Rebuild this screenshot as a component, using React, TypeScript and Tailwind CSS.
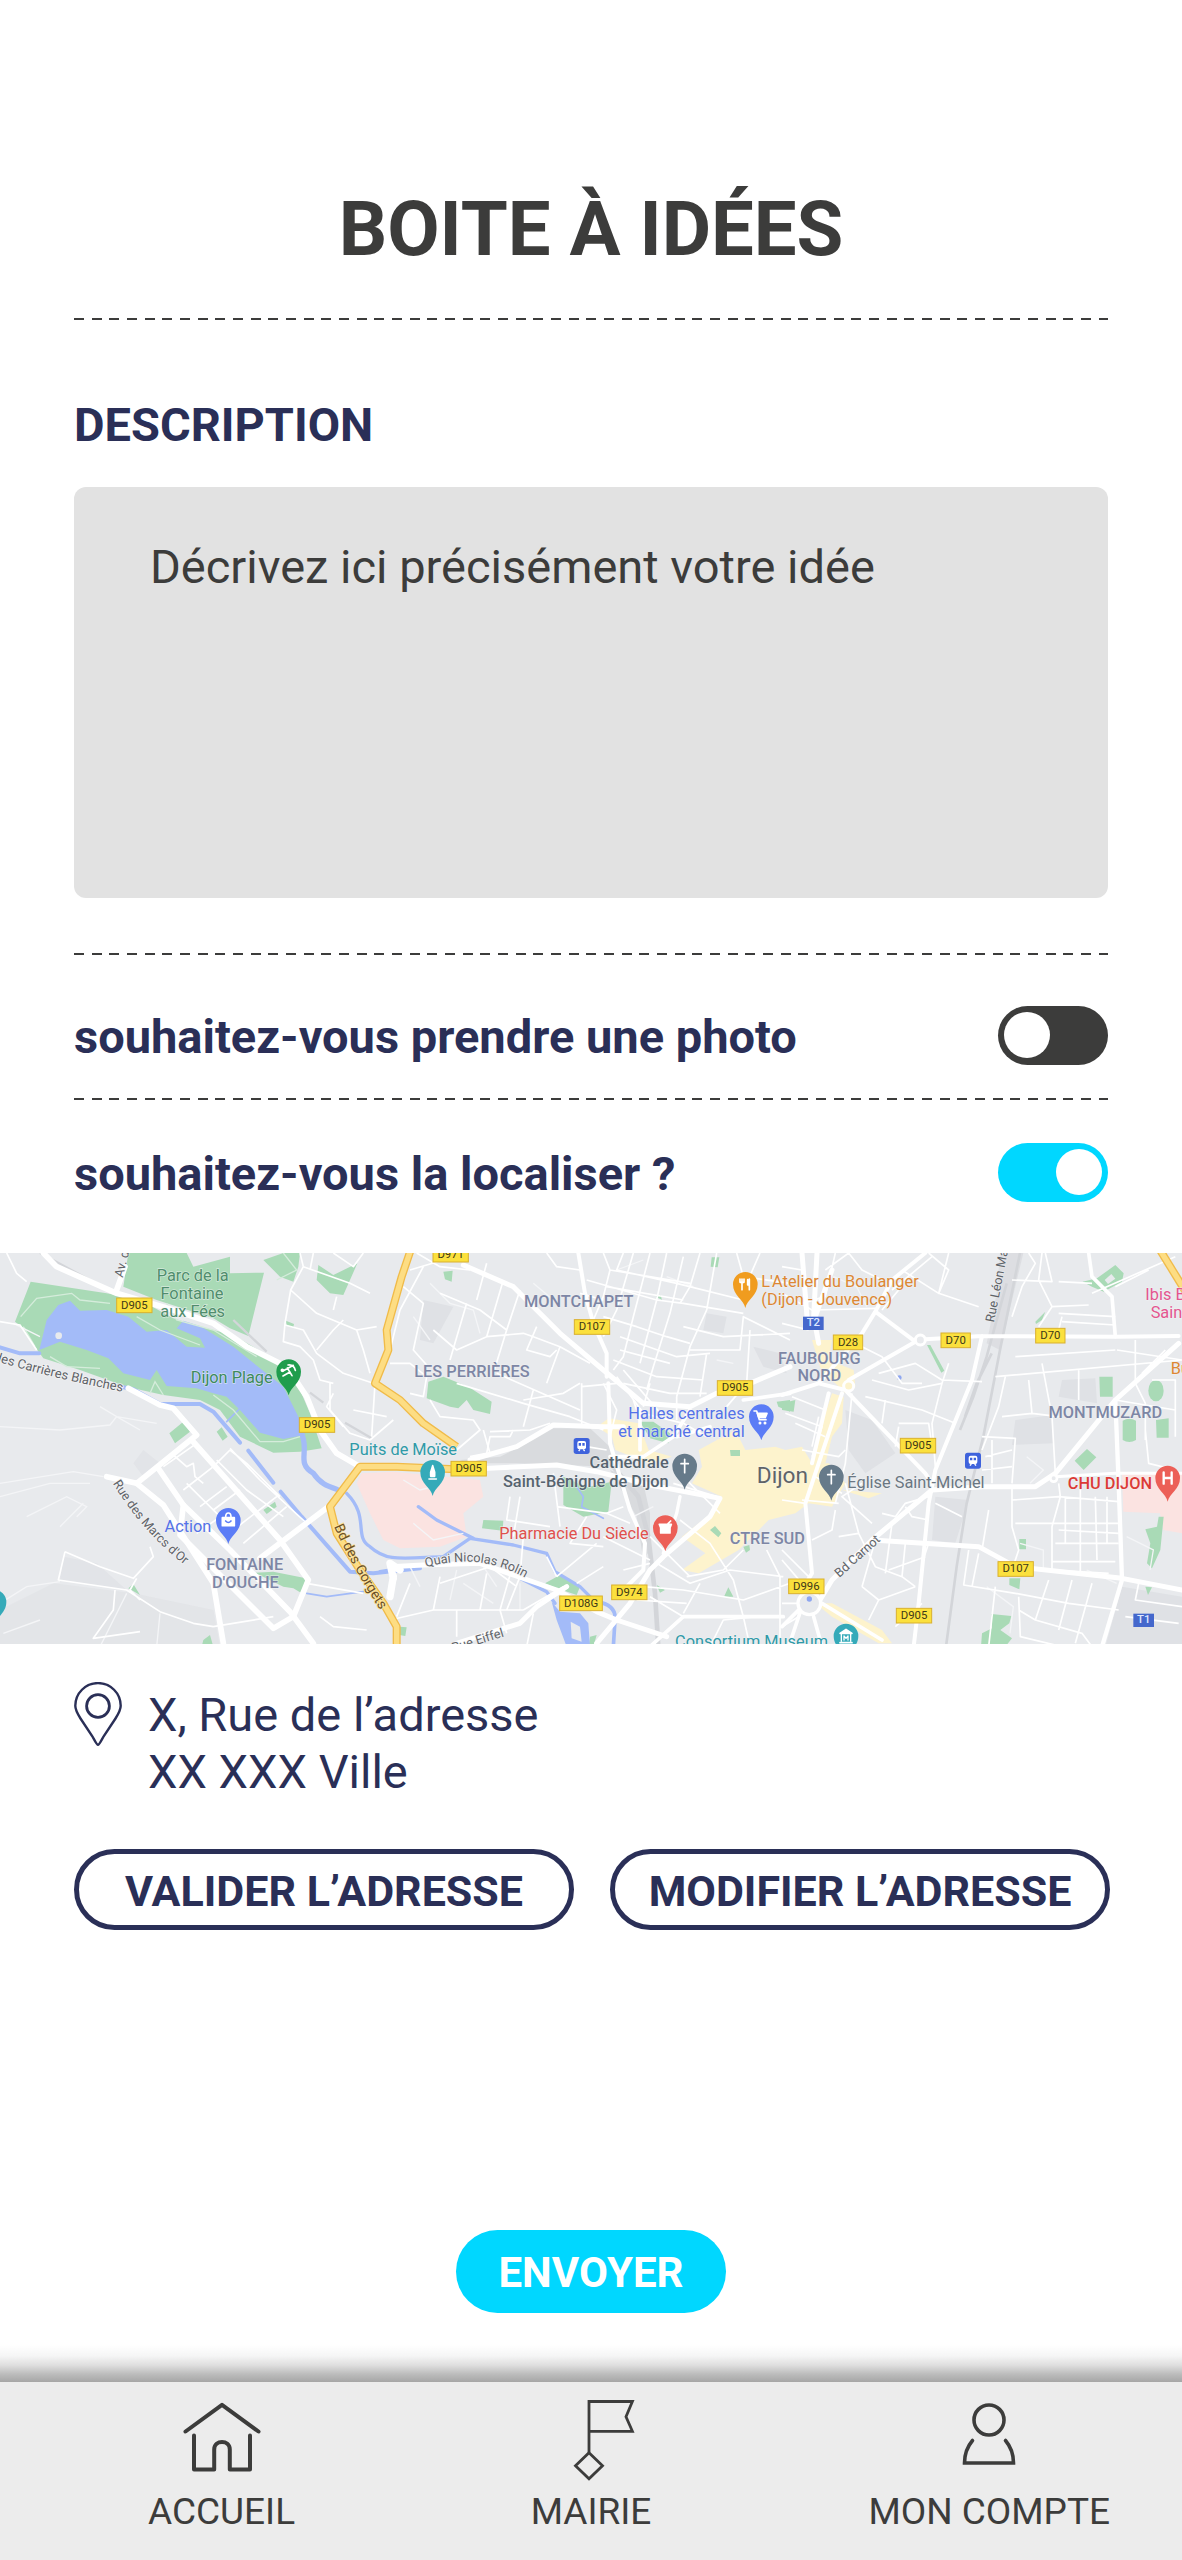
import React, { useState } from "react";

type Point = { x: number; y: number };

/* ---------- Icons ---------- */

function LocationIcon() {
  return (
    <svg viewBox="0 0 48 64" className="h-16 w-12 shrink-0" fill="none" stroke="#2a2f57" aria-hidden="true">
      <path
        strokeWidth="2.4"
        d="M24 62.8C22.8 62.8 22 61 18.5 54.5L6.5 36.5C3 31 1.3 28 1.3 23.8A22.7 22.7 0 0 1 46.7 23.8C46.7 28 45 31 41.5 36.5L29.5 54.5C26 61 25.2 62.8 24 62.8Z"
      />
      <circle cx="24" cy="24" r="11.4" strokeWidth="2.8" />
    </svg>
  );
}

function HomeIcon() {
  return (
    <svg viewBox="0 0 82 81" className="h-[81px] w-[82px]" fill="none" stroke="#3c3c3b" strokeWidth="4" strokeLinecap="round" strokeLinejoin="round" aria-hidden="true">
      <path d="M4.5 31.5L41 4.8L77.5 31.5" />
      <path d="M13 35.5V69.5H33.2V49.5C33.2 39.5 48.8 39.5 48.8 49.5V69.5H69V35.5" />
    </svg>
  );
}

function FlagIcon() {
  return (
    <svg viewBox="0 0 88 81" className="h-[81px] w-[88px]" fill="none" stroke="#3c3c3b" strokeWidth="2.8" aria-hidden="true">
      <path d="M42 52.5V1.5H85.4L79 16.7L85.4 31.3H42" />
      <path d="M42 52.7L55.5 65.7L42 78.7L28.5 65.7Z" />
    </svg>
  );
}

function PersonIcon() {
  return (
    <svg viewBox="0 0 60 81" className="h-[81px] w-[60px]" fill="none" stroke="#3c3c3b" strokeWidth="3.6" aria-hidden="true">
      <circle cx="30" cy="20" r="15" />
      <path strokeLinecap="round" d="M13.5 40.5C8 47 5.5 56 5.5 63H54.5C54.5 56 52 47 46.5 40.5" />
    </svg>
  );
}

/* ---------- Map ---------- */

const MID = 1170;
const EAST = 2346;

type Shield = Point & { text: string; w?: number };

const shields: Shield[] = [
  { x: 403, y: 166, text: "D905" },
  { x: 951, y: 525, text: "D905" },
  { x: MID + 182, y: 14, text: "D971" },
  { x: MID + 606, y: 231, text: "D107" },
  { x: MID + 1035, y: 414, text: "D905" },
  { x: MID + 236, y: 656, text: "D905" },
  { x: MID + 573, y: 1060, text: "D108G", w: 128 },
  { x: MID + 718, y: 1027, text: "D974" },
  { x: EAST + 198, y: 277, text: "D28", w: 88 },
  { x: EAST + 521, y: 271, text: "D70", w: 88 },
  { x: EAST + 805, y: 257, text: "D70", w: 88 },
  { x: EAST + 408, y: 587, text: "D905" },
  { x: EAST + 701, y: 957, text: "D107" },
  { x: EAST + 73, y: 1009, text: "D996" },
  { x: EAST + 396, y: 1097, text: "D905" },
];

type Label = Point & {
  text: string;
  color: string;
  size?: number;
  weight?: number;
  anchor?: "start" | "middle" | "end";
  turn?: number;
};

const labels: Label[] = [
  { x: 578, y: 92, text: "Parc de la", color: "#4f8d6c", anchor: "middle" },
  { x: 576, y: 147, text: "Fontaine", color: "#4f8d6c", anchor: "middle" },
  { x: 578, y: 202, text: "aux Fées", color: "#4f8d6c", anchor: "middle" },
  { x: 818, y: 398, text: "Dijon Plage", color: "#3d8a5d", anchor: "end" },
  { x: 634, y: 845, text: "Action", color: "#5472e8", anchor: "end" },
  { x: 734, y: 960, text: "FONTAINE", color: "#7d86a5", size: 49, weight: 500, anchor: "middle" },
  { x: 736, y: 1014, text: "D'OUCHE", color: "#7d86a5", size: 49, weight: 500, anchor: "middle" },
  { x: 1048, y: 615, text: "Puits de Moïse", color: "#2f9aa8" },
  { x: MID + 566, y: 171, text: "MONTCHAPET", color: "#7d86a5", size: 49, weight: 500, anchor: "middle" },
  { x: MID + 246, y: 382, text: "LES PERRIÈRES", color: "#7d86a5", size: 49, weight: 500, anchor: "middle" },
  { x: MID + 1064, y: 506, text: "Halles centrales", color: "#5472e8", anchor: "end" },
  { x: MID + 1064, y: 561, text: "et marché central", color: "#5472e8", anchor: "end" },
  { x: MID + 836, y: 655, text: "Cathédrale", color: "#56636f", weight: 500, anchor: "end" },
  { x: MID + 836, y: 710, text: "Saint-Bénigne de Dijon", color: "#56636f", weight: 500, anchor: "end" },
  { x: MID + 776, y: 866, text: "Pharmacie Du Siècle", color: "#e0504c", anchor: "end" },
  { x: EAST - 44, y: 882, text: "CTRE SUD", color: "#7d86a5", size: 49, weight: 500, anchor: "middle" },
  { x: EAST + 78, y: 698, text: "Dijon", color: "#5f6368", size: 68, anchor: "end" },
  { x: EAST - 62, y: 110, text: "L'Atelier du Boulanger", color: "#dd8733" },
  { x: EAST - 62, y: 165, text: "(Dijon - Jouvence)", color: "#dd8733" },
  { x: EAST + 112, y: 342, text: "FAUBOURG", color: "#7d86a5", size: 49, weight: 500, anchor: "middle" },
  { x: EAST + 112, y: 393, text: "NORD", color: "#7d86a5", size: 49, weight: 500, anchor: "middle" },
  { x: EAST + 970, y: 503, text: "MONTMUZARD", color: "#7d86a5", size: 49, weight: 500, anchor: "middle" },
  { x: EAST + 196, y: 713, text: "Église Saint-Michel", color: "#6a7682" },
  { x: EAST + 1110, y: 717, text: "CHU DIJON", color: "#dc3b36", weight: 500, anchor: "end" },
  { x: EAST + 1090, y: 150, text: "Ibis Budget", color: "#e4558f" },
  { x: EAST + 1106, y: 204, text: "Saint-Apollinaire", color: "#e4558f" },
  { x: EAST + 1166, y: 371, text: "Burger", color: "#dd8733" },
  { x: EAST + 138, y: 1190, text: "Consortium Museum", color: "#2f9aa8", anchor: "end" },
  { x: EAST + 172, y: 984, text: "Bd Carnot", color: "#5f6368", size: 38, turn: -42 },
  { x: EAST + 636, y: 218, text: "Rue Léon Mauris", color: "#5f6368", size: 38, turn: -79 },
  { x: 368, y: 84, text: "Av. du Lac", color: "#5f6368", size: 38, turn: -76 },
  { x: MID + 190, y: 1206, text: "Rue Eiffel", color: "#5f6368", size: 38, turn: -17 },
];

function PinMarker({ x, y, fill, children }: Point & { fill: string; children?: React.ReactNode }) {
  return (
    <g transform={`translate(${x} ${y})`}>
      <path d="M0 71C-5 46-37 34-37 0A37 37 0 0 1 37 0C37 34 5 46 0 71Z" fill={fill} />
      <g fill="none" stroke="#fff" strokeWidth="5" strokeLinecap="round" strokeLinejoin="round">
        {children}
      </g>
    </g>
  );
}

function TrainMarker({ x, y }: Point) {
  return (
    <g transform={`translate(${x} ${y})`}>
      <rect x="-24" y="-24" width="48" height="48" rx="8" fill="#3f63dc" />
      <rect x="-13" y="-15" width="26" height="25" rx="6" fill="#fff" />
      <path d="M-9 -9H-2V-1H-9ZM2 -9H9V-1H2Z" fill="#3f63dc" />
      <path d="M-9 15L-5 10M9 15L5 10" stroke="#fff" strokeWidth="4" />
    </g>
  );
}

const CROSS = "M0 -20V20M-11 -7H11";

function CityMap() {
  return (
    <svg
      viewBox="0 9 3546 1173"
      className="block w-full"
      role="img"
      aria-label="Carte de Dijon"
      fontFamily="Roboto, sans-serif"
    >
      <rect y="0" width="3546" height="1190" fill="#e8eaed" />

      {/* built-up areas in a slightly darker tone */}
      <g fill="#dfe1e5">
        <path d="M0 1080L160 1000L400 1030L640 1080L660 1190H0Z" opacity=".6" />
        <path d="M430 600L480 640L430 680L400 640ZM190 920L290 940L380 1020L180 990Z" opacity=".7" />
        <g transform="translate(1170 0)">
          <path d="M100 150L190 170L130 280L90 270Z" />
          <path d="M1090 290L1170 310L1190 370L1120 350ZM950 190L1010 200L1000 250L940 240Z" />
        </g>
        <g transform="translate(2346 0)">
          <path d="M190 480L270 510L340 610L250 670L200 600Z" />
          <path d="M460 740L560 750L520 880L450 870Z" />
          <path d="M700 510L810 495L815 580L690 585ZM840 390L940 385L945 460L830 440Z" />
          <path d="M1020 1010L1200 1040V1190H970Z" />
        </g>
      </g>

      {/* town centre */}
      <g transform="translate(2346 0)" fill="#fdf3cd">
        <path d="M-555 530L-520 505L-430 520L-400 600L-330 620L-400 640L-500 600L-510 560Z" />
        <path d="M-250 600L-140 540L-110 600L-20 590L10 600L60 590L90 640L140 640L190 700L150 770L80 760L40 790L-40 810L-130 900L-250 970L-300 960L-230 910L-300 860L-200 780L-180 740L-270 700L-240 650Z" />
        <path d="M150 430L185 440L180 520L150 560L130 640L90 640L110 550ZM90 270L150 270L140 330L215 360L220 410L190 430L160 400L120 370Z" />
        <path d="M100 1060L150 1060L300 1140L330 1180H290L150 1100ZM180 720L300 730L260 745Z" />
      </g>

      {/* hospital grounds */}
      <g fill="#fbe3e1">
        <path d="M1085 670L1180 665L1440 690L1450 740L1390 790L1400 860L1320 890L1200 895L1150 870L1110 790L1070 700Z" />
        <path d="M3366 670H3546V850L3490 840L3480 790L3370 785Z" />
      </g>

      {/* parks */}
      <g fill="#a9dab6">
        <path d="M385 9H560L580 50L690 20V70L792 68L745 258L690 235L640 205L470 150L370 110Z" />
        <path d="M92 95L320 130L420 150L520 205L600 230L700 255L860 350L900 420L930 490L965 595L900 605L820 608L720 560L660 480L600 450L490 435L380 410L240 360L130 325L105 290L70 235L45 215Z" />
        <path d="M790 30L850 9H900L895 50L880 95L840 80ZM955 45L1000 75L1072 40L1050 90L1030 135L990 130L950 90Z" />
        <path d="M508 550L550 515L570 545L525 580ZM650 545L665 532L683 560L668 572ZM790 780L825 755L830 770L800 792Z" />
        <path d="M765 968L820 965L918 985L905 1030L880 1015L850 1010ZM385 1015L400 1002L420 1035ZM610 1170L630 1155L640 1190H605ZM858 212L882 222L880 232L860 226Z" />
        <g transform="translate(1170 0)">
          <path d="M115 395L160 380L235 410L305 455L300 492L250 480L230 450L205 475L180 470L110 445Z" />
          <path d="M520 680L590 712L665 695L655 785L580 800L520 765ZM280 810L340 812L338 842L276 835Z" />
          <path d="M465 1000L510 975L570 1010L560 1035L500 1015ZM750 515L790 515L840 550L835 580L780 565ZM1160 455L1200 450V485L1165 470Z" />
          <path d="M160 65L188 62L185 95L165 88ZM965 22L988 22L983 52L962 50ZM798 140L812 135L816 150ZM1020 600H1050V618H1022ZM960 840L975 828L994 850L985 862ZM1060 890L1078 885L1080 900L1068 908ZM1002 1040L1015 1012L1030 1040ZM800 1005L825 1020L810 1028ZM30 1130L50 1132L46 1158L28 1155ZM600 1160L620 1155L610 1190H596Z" />
        </g>
        <g transform="translate(2346 0)">
          <path d="M0 460L40 450L35 485L0 480ZM435 285H445L487 362L478 368ZM760 215L790 185L780 210L762 222Z" />
          <path fillRule="evenodd" d="M902 95L945 85L1000 45L1025 70L1020 95L965 125L930 110ZM968 90L988 72L1000 86L978 102Z" />
          <path d="M952 380H992V440H954ZM1022 512Q1042 500 1062 512V570Q1042 582 1022 570ZM1122 510L1160 505V563H1124ZM878 632L915 597L943 622L905 660Z" />
          <ellipse cx="1122" cy="422" rx="23" ry="32" />
          <path d="M1090 838L1125 830L1130 800L1145 800L1135 900L1110 955L1095 940L1105 880ZM712 867H732V898H712ZM682 985H715L712 1018L682 1005ZM628 1092L688 1098L682 1120L655 1140L690 1165L670 1190H597L600 1150L630 1135ZM1090 1010L1110 1012L1098 1035Z" />
        </g>
      </g>

      {/* railways */}
      <g fill="none" stroke="#d3d5d9">
        <g fill="#d9dbde" stroke="none">
          <path d="M1380 630L1500 620L1600 570L1660 535L1770 535L1840 600L1830 650L1680 645L1550 640L1400 640Z" />
          <path d="M1830 660L1930 700L1950 790V900L1930 930L1910 800Z" />
          <path d="M3000 9H3070L3000 300L2960 280L2990 130Z" opacity=".8" />
        </g>
        <path strokeWidth="14" d="M1840 650L1915 740L1945 860L1965 1030L1975 1190" />
        <path strokeWidth="8" d="M3060 9L3000 300L2950 560L2900 760L2870 950L2838 1190M3020 100L2960 320L2920 440L2880 540M2975 310L2930 400L2895 500" />
        <path strokeWidth="7" d="M120 9L260 85L330 120M700 210L800 305M930 428L970 458M1035 518L1115 565" />
      </g>

      {/* lakes, river and canals */}
      <path
        fill="#a3bbf8"
        d="M118 300L140 210L175 165L210 152L240 182L320 180L385 200L440 245L500 240L560 290L615 293L600 265L530 235L550 212L600 228L700 290L780 355L850 410L880 470L905 520L915 555L850 567L780 548L720 480L680 440L640 430L590 415L500 408L470 360L450 390L370 370L325 325L260 300L180 275Z"
      />
      <g fill="none" stroke="#a3bbf8" strokeWidth="12" strokeLinecap="round" strokeLinejoin="round">
        <path d="M0 292L60 310L118 310" />
        <path d="M350 408L400 418L480 462L600 462L640 485L720 578M745 602L820 698M842 725L905 800L1050 965L1120 970L1260 955" />
        <path strokeWidth="16" d="M908 560C925 610 890 640 940 670C960 700 980 708 1010 718" />
        <path strokeWidth="10" d="M1040 730C1110 800 1060 860 1110 890C1160 935 1200 925 1330 920L1410 865L1540 885L1640 910L1665 965L1740 1010L1770 1040M1140 965L1200 955M1255 770L1310 810L1420 865M1560 985L1640 1025L1665 1060" />
        <path strokeWidth="5" d="M920 1030L980 1040L1090 1025M680 515L720 475M1730 710L1750 740L1745 770L1810 805" />
        <path strokeWidth="11" d="M1790 1055Q1850 1065 1845 1110L1840 1190" />
        <path fill="#a3bbf8" stroke="none" d="M1655 1055L1680 1085L1740 1090L1765 1120L1770 1190H1700L1670 1110Z" />
        <path fill="#e8eaed" stroke="none" d="M1712 1115L1740 1130L1745 1175L1715 1165Z" />
      </g>
      <circle cx="176" cy="257" r="10" fill="#e8eaed" />
      <g fill="#8ea6f0">
        <circle cx="2698" cy="383" r="7" />
      </g>

      {/* paths through the parks */}
      <g fill="none" stroke="#d5ecdb" strokeWidth="4">
        <path d="M62 200L110 145L215 130L240 150L330 160M105 290L70 230M150 320L200 350L300 355M410 200L480 240L560 270L600 285M640 435L700 480L780 575L850 575L900 560M450 430L465 395L490 435M500 160L530 210L640 240L770 320M850 9L890 60L830 90M570 1020" />
      </g>

      {/* faint tracks */}
      <g fill="none" stroke="#f4f5f7" strokeWidth="4">
        <path d="M0 530L180 540L330 525L350 500L420 540M0 700L220 665L310 680M80 800L200 740L260 770L230 800M0 740L150 700L270 700M40 220L120 260M300 470L350 500L470 520M0 1060L80 1010L180 995M180 830L250 760M380 1030L300 1190M480 1090L470 1190M10 1150L120 1110" />
        <path d="M1290 100L1350 160L1420 180L1440 250M1240 200L1290 270M1600 100L1660 150M1850 60L1930 30M2000 80L2080 110M2150 330L2200 340M1900 800L1960 770" />
        <path d="M1230 950L1260 1010M1370 960L1350 1050M1390 1000L1480 1060M1560 1000V1080M1210 690L1260 720L1300 710M1240 820L1300 870L1390 850M1450 950L1490 1010" />
        <path d="M3060 880L3130 900V960M2960 1010L3040 1070L3030 1150M3260 960L3350 1000M3380 860L3460 900L3450 960M3080 620L3130 660L3090 700M2500 80L2570 110L2600 170" />
      </g>

      {/* minor streets, western districts */}
      <g fill="none" stroke="#fff" strokeWidth="5" strokeLinejoin="round">
        <path d="M900 9L910 50L872 120L950 190L1070 240L1130 230M872 120L855 220L850 275L900 290L940 330L960 390L1000 400M855 225L910 240L950 310L1030 370L1120 400M910 50L1050 100L1110 130M940 9L930 60M1000 9L1060 50L1090 9M1000 180L1010 140M1070 240L1090 300L1110 370M950 300L1000 240L1030 210M990 400L990 480L1050 550L1110 570L1180 510M1000 430L980 470L1030 530M1125 400L1115 560" />
        <path d="M490 650L590 580M550 720L640 650L690 600M520 615L560 650L580 640L585 680L610 700M600 770L680 710M640 780L720 720M650 630L740 720L850 800M690 595L780 690L920 820M700 840L830 740M730 880L860 770M590 850L690 780M690 600L740 640L790 690L840 740M560 700L660 800" />
        <path d="M195 905L175 990L380 1020L480 1085L580 1120L640 1130M195 905L300 950L400 985L460 920L450 890M345 1020L340 1080L280 1165L420 1145M410 985L390 1020L420 1050M640 1130L820 1100M960 1100L1000 1130L1100 1140M920 1000L1090 1030" />
        <path d="M0 215L60 225L110 300M20 9L50 70L80 95M1060 480L1160 500" />
      </g>

      {/* minor streets, central districts */}
      <g transform="translate(1170 0)" fill="none" stroke="#fff" strokeWidth="5" strokeLinejoin="round">
        <path d="M60 60L230 9M80 9L150 50L240 60M100 50L30 180L0 300M40 110L100 160L70 300L110 345M150 130L270 180L350 240M130 240L200 300L290 260L400 250L430 260M230 160L180 330M290 40L260 150M340 90L290 260M390 120L350 240L310 370M430 260L510 290L600 340M440 230L410 300L480 320L500 300M510 290L470 400M320 370L570 480M400 450L520 430L570 400M200 400L400 460L540 500L640 540M430 420L400 530M575 400V530M575 410L680 400M0 340L60 340L110 380L100 440L60 430M120 450L150 500L250 510L270 540L200 600M300 545L420 540L480 520M370 540L360 560L300 560L290 610L240 620" />
        <path d="M470 9L500 50L570 60M640 9L660 60L640 140L610 210M730 9L680 180L640 260M590 90L800 150L880 160L1060 190M570 130L640 150M700 9L680 60L860 100L1060 150M780 9L730 200L700 320L670 360M830 9L800 150L750 340M880 20L840 190L790 350L770 420M930 9L900 110L870 160M980 9L950 180L900 290L860 440M660 60L900 100M650 110L880 150M640 200L740 230L830 260L900 280M690 260L860 320L960 310M690 300L840 340M670 330L800 380L940 390M880 230L1000 260L1200 250M900 300L1050 300L1060 200L1200 270M1040 9L1060 80L1200 100M1110 9L1070 100M1080 240L1070 400L1010 470M950 310L930 440M700 400L840 430L950 430M780 400L760 470M860 440V510M730 450L740 480" />
        <path d="M640 400L680 480L660 560M680 380L760 490L880 520L950 560M700 360L820 500M590 590L650 600M360 740L350 810L480 830M390 740L370 860M490 670L510 830M500 770L650 790L700 770M590 800L540 880L640 890M640 860L780 930M620 880L500 980M650 790L720 820M280 540L300 610M400 860L390 980L350 1080M150 1000L300 950L380 1010M150 980L130 1080L0 1110M130 1080L400 1080M200 1080V1160M290 970L270 1080M370 940L330 1080L350 1150M60 1000L20 1100M430 1090L410 1190M400 1080L520 1010M860 660L990 790M850 700L980 740M870 810L960 880L1030 990L1060 1100M890 980L1000 960L1060 900M800 940L900 1000L1020 960L1180 980M760 1010L880 1020L1060 1050L1200 1000M880 1090L930 1000M960 1190L1000 1110L1100 1100M1130 900L1170 980L1170 1190M780 1040L880 1100M740 1050L890 1060M1060 1100L1080 1190M780 860L900 980" />
        <path d="M500 980L470 920M640 950L560 1000M700 960L780 940" />
      </g>

      {/* minor streets, eastern districts */}
      <g transform="translate(2346 0)" fill="none" stroke="#fff" strokeWidth="5" strokeLinejoin="round">
        <path d="M0 50L60 60M130 60L200 9L240 60L300 90M160 9L130 140L60 160M0 130L90 180L280 175M330 120L450 20M360 60L470 130L500 60L440 9M500 9L470 130L590 170M300 180L350 120M0 220L80 240M240 290L300 320L360 400L420 400M290 370L400 340L480 390L600 395M270 390L380 420L480 400L450 520L460 650M480 400L500 340M250 440L420 480L520 520M210 430L190 640L160 760M310 450L300 520M350 520L440 520L450 590M350 530L340 590M10 490L120 530L90 620M30 440L130 480M40 520L130 560" />
        <path d="M740 9L760 40L720 110L690 200M780 9L770 90L810 170L920 165M690 90L810 95L790 9M810 170L770 230M830 95L930 100M930 130L1180 20M1000 110L1100 60M830 190L1000 200M840 215L1000 225M700 320L1000 300M640 380L1200 330M670 380L650 470L600 600M740 390L750 490M660 500L750 490L830 500M780 340L810 500L820 670M890 360V450M840 200L830 240M1005 300L1200 330M1060 270V400M1080 370L1150 300M1090 540L1100 640L1180 660M1060 400L1090 460L1090 570M1000 450L1180 480M1110 390H1180V560" />
        <path d="M600 560L700 565L690 700M610 620L690 600M600 660L690 650M630 570V700M690 710V830L710 900L690 960M690 750L830 740L1010 755M700 820H1010M830 700L835 740L810 830V930M850 740V880M895 700V970M940 740L945 930M975 740V880L1010 880M820 880H1010M810 935L1000 935M830 840L1010 850M810 930V960L980 970M600 900L620 780M560 900L545 1005L700 1030L860 1060L1010 1080M590 910L570 1010M640 1010L620 1190M710 1040L715 1160L840 1190M800 990L760 1110L900 1150L930 1190M870 990L830 1140M930 1000L880 1180M1070 1000L1060 1050L1200 1070M1030 1100L1190 1120M710 1080L760 1110" />
        <path d="M190 700L230 850L280 950L360 980L400 1010M160 780L150 840L90 870M230 850L170 860M270 820L180 740L240 700M300 790L340 800L370 760L440 740M330 820L310 970M370 770L390 800L440 810M370 880L360 980M240 1010L290 1050L400 1010M280 870L240 1010M290 1050L260 1110M320 960L430 920M440 880L420 940M460 760L540 800M100 680L180 730M60 750L170 760M0 750L70 760M60 600L170 620L190 600M110 500L90 590M0 900L80 980M0 930L60 1000M420 1060L340 1130M0 1060L50 1060M0 1130L50 1100" />
      </g>

      {/* main roads */}
      <g fill="none" stroke="#fff" strokeLinecap="round" strokeLinejoin="round">
        <g strokeWidth="17">
          <path d="M130 9L170 50L350 130L520 180L640 220L740 290L860 350L920 440L960 540L1010 610L1080 650" />
          <path d="M385 415L480 465L520 475L590 555L410 700L320 680M575 570L840 870L925 990L880 1100L820 1135L540 855L550 765" />
          <path d="M475 655L550 765L690 900L870 1085L940 1180M410 700L490 765L640 1000L670 1180M780 925L985 770" />
          <path d="M350 120L375 50" />
          <path d="M1180 985L1170 940L1200 960M1170 1040L1180 980" strokeWidth="22" />
        </g>
        <g transform="translate(1170 0)" strokeWidth="15">
          <path d="M220 45L370 110L510 250L640 360L760 460L900 470L980 430L1080 400L1200 350" />
          <path strokeWidth="12" d="M565 9L585 130L610 220L650 310L650 380M655 400L660 580L720 780L765 880L760 960L700 1020" />
          <path d="M240 630L380 590L490 525L640 530L700 530M190 660L500 645L620 665L780 705L990 745L960 800L820 920L780 960L720 1060L620 1180" />
          <path d="M870 740L860 790L820 910" strokeWidth="10" />
          <path d="M0 950L100 945L270 940L500 1020L620 1085L680 1110L830 1160" />
          <path d="M530 1010L440 1070L390 1120L200 1180" />
          <path strokeWidth="11" d="M900 480L850 560L760 620L660 620M1060 450L1200 430M750 480V600M960 530L860 560" />
          <path strokeWidth="11" d="M780 1190L880 1100H1180" />
        </g>
        <g transform="translate(2346 0)" strokeWidth="15">
          <path d="M60 9L75 200M105 9L95 200L110 280M150 60L100 200" />
          <path d="M200 390L400 275L280 185L240 250L110 400L0 435M110 400L190 420L430 670L450 700M280 185L330 90L430 9" strokeWidth="12" />
          <path d="M430 268L600 258L1000 260L1190 258M600 258L570 390L460 660L440 760L410 1060L395 1190" strokeWidth="12" />
          <path d="M920 9L930 80L990 140L1000 260" strokeWidth="11" />
          <path d="M1190 280L1000 450L820 670L760 710L600 710L450 720L270 870L150 990L90 1090" />
          <path d="M1000 450L1010 700L1020 990L960 1190" strokeWidth="13" />
          <path d="M270 870L590 890L700 950L1020 985L1200 1020" />
          <path d="M820 680L1000 670H1200" strokeWidth="9" />
          <path d="M180 430L110 640L70 760L90 970L60 1020M140 430L90 640" strokeWidth="12" />
          <path d="M0 1130L60 1070L20 1190M120 1060L300 1170M95 1100L120 1190" strokeWidth="11" />
          <circle cx="415" cy="270" r="15" strokeWidth="9" fill="#e8eaed" />
          <circle cx="200" cy="408" r="15" strokeWidth="9" fill="#fdf3cd" />
          <circle cx="82" cy="1060" r="34" strokeWidth="10" fill="#e8eaed" />
          <circle cx="82" cy="1047" r="8" stroke="none" fill="#8ea6f0" />
          <circle cx="815" cy="685" r="10" strokeWidth="8" fill="#e8eaed" />
        </g>
      </g>

      {/* expressways */}
      <g fill="none" strokeLinejoin="round">
        {[
          { stroke: "#f0bb49", width: 24 },
          { stroke: "#fddd83", width: 16 },
        ].map((layer) => (
          <g key={layer.stroke} stroke={layer.stroke} strokeWidth={layer.width}>
            <path d="M1232 0L1205 80L1160 240L1165 300L1125 400L1200 450L1270 520L1370 590" />
            <path d="M1420 660L1190 650L1080 650L990 770L1010 850L1080 960L1150 1060L1190 1130V1190" />
            <path d="M3480 0L3560 130" />
          </g>
        ))}
      </g>

      {/* street names that follow a curve */}
      <path id="street-west" d="M-62 318Q100 372 360 424" fill="none" />
      <path id="street-marcs" d="M338 700Q430 850 560 950" fill="none" />
      <path id="street-gorgets" d="M1002 830Q1060 960 1160 1110" fill="none" />
      <path id="street-quai" d="M1278 952Q1440 905 1580 986" fill="none" />
      <g fill="#5f6368" fontSize="39" stroke="#f1f2f4" strokeWidth="5" paintOrder="stroke">
        <text><textPath href="#street-west">R. des Carrières Blanches</textPath></text>
        <text fontSize="38"><textPath href="#street-marcs">Rue des Marcs d'Or</textPath></text>
        <text fontSize="42" fill="#6b5024" stroke="#fbe3a0"><textPath href="#street-gorgets">Bd des Gorgets</textPath></text>
        <text fontSize="38"><textPath href="#street-quai">Quai Nicolas Rolin</textPath></text>
      </g>

      {labels.map((l) => (
        <text
          key={l.text + l.x}
          x={l.x}
          y={l.y}
          fill={l.color}
          fontSize={l.size ?? 49}
          fontWeight={l.weight ?? 400}
          textAnchor={l.anchor ?? "start"}
          transform={l.turn ? `rotate(${l.turn} ${l.x} ${l.y})` : undefined}
          stroke="#f1f3f4"
          strokeWidth="4"
          strokeOpacity="0.6"
          paintOrder="stroke"
        >
          {l.text}
        </text>
      ))}

      {shields.map((s) => {
        const w = s.w ?? 106;
        return (
          <g key={`${s.text}-${s.x}`}>
            <rect x={s.x - w / 2} y={s.y - 22} width={w} height="44" fill="#fbe03d" stroke="#d9b02f" strokeWidth="3" />
            <text x={s.x} y={s.y + 10} textAnchor="middle" fontSize="34" fill="#3d3817">
              {s.text}
            </text>
          </g>
        );
      })}
      {[
        { x: EAST + 94, y: 220, text: "T2" },
        { x: EAST + 1085, y: 1111, text: "T1" },
      ].map((t) => (
        <g key={t.text}>
          <rect x={t.x - 31} y={t.y - 20} width="62" height="40" fill="#4467cc" />
          <text x={t.x} y={t.y + 9} textAnchor="middle" fontSize="34" fontWeight="500" fill="#dfe7ff">
            {t.text}
          </text>
        </g>
      ))}

      <TrainMarker x={MID + 575} y={588} />
      <TrainMarker x={EAST + 573} y={632} />

      <PinMarker x={866} y={365} fill="#1f9d4d">
        <path d="M-17 -2L14 -19M-4 -11L10 12M-17 13L4 1M-2 -20Q16 -22 20 -4" />
        <circle cx="-19" cy="-4" r="3" fill="#fff" />
      </PinMarker>
      <PinMarker x={685} y={811} fill="#5b7cf6">
        <path d="M-18 -8H18V16H-18Z" fill="#fff" />
        <path d="M-8 -10Q-8 -22 0 -22Q8 -22 8 -10" />
        <path d="M-8 2Q0 11 8 2" stroke="#5b7cf6" />
      </PinMarker>
      <PinMarker x={-18} y={1056} fill="#35aab9" />
      <PinMarker x={MID + 128} y={667} fill="#35aab9">
        <path d="M0 -20L6 0V12H-6V0ZM-11 20H11" fill="#fff" />
      </PinMarker>
      <PinMarker x={MID + 1066} y={103} fill="#f09c1f">
        <path d="M-10 -16V16M-16 -16V-6H-4V-16M12 -16V16M7 -14V2H12" />
      </PinMarker>
      <PinMarker x={MID + 1114} y={500} fill="#5b7cf6">
        <path d="M-22 -17H-14L-6 9H14" />
        <path d="M-12 -10H17L12 2H-8Z" fill="#fff" />
        <circle cx="-4" cy="19" r="2" />
        <circle cx="11" cy="19" r="2" />
      </PinMarker>
      <PinMarker x={MID + 884} y={648} fill="#667a8a">
        <path d={CROSS} />
      </PinMarker>
      <PinMarker x={MID + 826} y={833} fill="#ec5f57">
        <path d="M-18 -10H18L14 0V16H-14V0ZM8 -12L16 -20" fill="#fff" />
      </PinMarker>
      <PinMarker x={EAST + 148} y={681} fill="#667a8a">
        <path d={CROSS} />
      </PinMarker>
      <PinMarker x={EAST + 1157} y={684} fill="#ec5f57">
        <path strokeWidth="7" d="M-12 -17V17M12 -17V17M-12 0H12" />
      </PinMarker>
      <PinMarker x={EAST + 192} y={1158} fill="#35aab9">
        <path d="M-18 -8L0 -20L18 -8ZM-18 20H18" fill="#fff" />
        <path d="M-14 -6V16M14 -6V16M-6 12V0L0 7L6 0V12" strokeWidth="4" />
      </PinMarker>
    </svg>
  );
}

/* ---------- Form parts ---------- */

function DashedRule() {
  return (
    <hr className="mx-[74px] h-0.5 border-0 bg-[repeating-linear-gradient(90deg,#3c3c3b_0_10px,transparent_10px_18px,#3c3c3b_18px_28px,transparent_28px_35px,#3c3c3b_35px_45px,transparent_45px_53px)]" />
  );
}

function ToggleRow({ id, label, initial }: { id: string; label: string; initial: boolean }) {
  const [on, setOn] = useState(initial);
  return (
    <div className="mx-[74px] flex items-center justify-between">
      <label htmlFor={id} className="pt-1 text-[47px] leading-[56px] font-bold text-[#2a2f57]">
        {label}
      </label>
      <input
        id={id}
        type="checkbox"
        role="switch"
        checked={on}
        onChange={(e) => setOn(e.target.checked)}
        className="flex h-[59px] w-[110px] shrink-0 cursor-pointer appearance-none items-center rounded-full bg-[#3c3c3b] px-1.5 before:block before:size-[46px] before:rounded-full before:bg-white before:content-[''] checked:justify-end checked:bg-[#00d7ff]"
      />
    </div>
  );
}

const outlineButton =
  "h-[81px] flex-1 cursor-pointer rounded-full border-5 border-[#2a2f57] pt-1 text-[43px] leading-none font-bold whitespace-nowrap text-[#2a2f57]";

const navLink = "flex flex-col items-center gap-[11px] text-[37px] leading-10 text-[#3c3c3b]";

export default function App() {
  return (
    <div className="flex min-h-screen flex-col bg-white font-[Roboto,sans-serif] text-[#3c3c3b]">
      <main className="flex flex-col">
        <h1 className="mb-[49px] pt-[189px] text-center text-[76px] leading-20 font-bold">BOITE À IDÉES</h1>
        <DashedRule />

        <div className="mx-[74px] mt-[75px] mb-[55px] flex flex-col gap-8">
          <label htmlFor="description" className="text-[47px] leading-[60px] font-bold text-[#2a2f57]">
            DESCRIPTION
          </label>
          <textarea
            id="description"
            placeholder="Décrivez ici précisément votre idée"
            className="block h-[411px] w-full resize-none rounded-xl bg-[#e2e2e2] px-[76px] pt-[51px] text-[47px] leading-[57px] text-[#3c3c3b] placeholder:text-[#3c3c3b]"
          />
        </div>

        <DashedRule />
        <div className="pt-[50px] pb-[33px]">
          <ToggleRow id="photo" label="souhaitez-vous prendre une photo" initial={false} />
        </div>
        <DashedRule />
        <div className="pt-[42px] pb-[51px]">
          <ToggleRow id="localiser" label="souhaitez-vous la localiser ?" initial={true} />
        </div>

        <CityMap />

        <div className="mx-[74px] mt-[38px] flex items-start gap-[26px]">
          <LocationIcon />
          <address className="pt-1 text-[47px] leading-[57px] text-[#2a2f57] not-italic">
            X, Rue de l’adresse
            <br />
            XX XXX Ville
          </address>
        </div>

        <div className="mt-[49px] mr-[72px] ml-[74px] flex gap-9">
          <button type="button" className={outlineButton}>VALIDER L’ADRESSE</button>
          <button type="button" className={outlineButton}>MODIFIER L’ADRESSE</button>
        </div>

        <button
          type="submit"
          className="mt-[300px] mb-8 h-[83px] cursor-pointer self-center rounded-full bg-[#00d7ff] px-[42px] pt-0.5 text-[42px] leading-none font-bold text-white"
        >
          ENVOYER
        </button>
      </main>

      <footer className="mt-auto">
        <div className="h-[37px] bg-[linear-gradient(#ffffff,#f5f5f5_30%,#dedede_55%,#bdbdbd_78%,#a6a6a6)]" />
        <nav className="grid grid-cols-[1fr_auto_1fr] bg-[#ececec] px-[72px] pt-[18px] pb-7">
          <a href="#accueil" className={`${navLink} ml-[76px] justify-self-start`}>
            <HomeIcon />
            ACCUEIL
          </a>
          <a href="#mairie" className={navLink}>
            <FlagIcon />
            MAIRIE
          </a>
          <a href="#compte" className={`${navLink} justify-self-end`}>
            <PersonIcon />
            MON COMPTE
          </a>
        </nav>
      </footer>
    </div>
  );
}
